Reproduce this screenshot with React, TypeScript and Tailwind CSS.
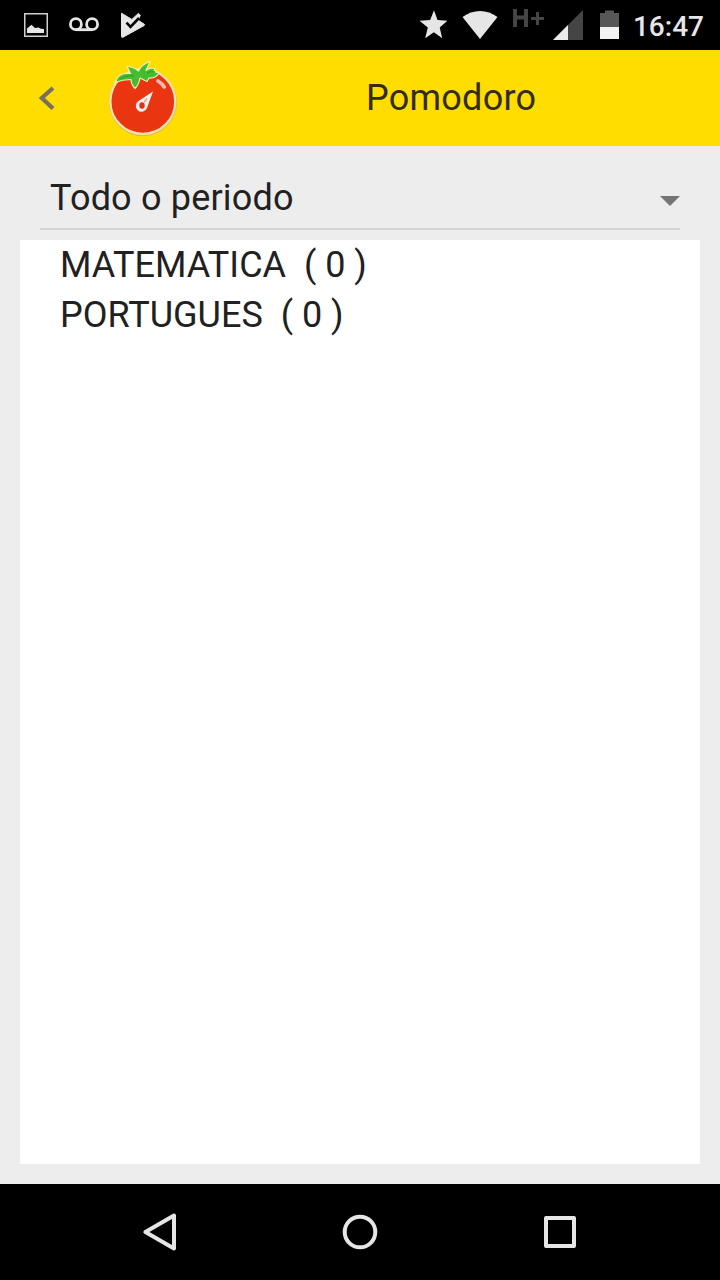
import { useState } from 'react';

type Subject = { name: string; count: number };

const SUBJECTS: Subject[] = [
  { name: 'MATEMATICA', count: 0 },
  { name: 'PORTUGUES', count: 0 },
];

function StatusBar() {
  return (
    <div className="flex h-[50px] shrink-0 items-center justify-between bg-black pr-4 pl-6 text-[#e6e6e6]">
      <div className="flex items-center">
        <svg width="24" height="50" viewBox="0 0 24 50" fill="none">
          <rect x="0.75" y="13.75" width="22.5" height="22.5" stroke="#cfcfcf" strokeWidth="1.5" />
          <path d="M3 33v-4.5l4.5-3.7 3.5 3.2 3.5-.6 2.5 1.4 3 .2V33z" fill="currentColor" />
        </svg>
        <svg className="ml-[21px]" width="30" height="50" viewBox="0 0 30 50" fill="none" stroke="currentColor" strokeWidth="2.8">
          <circle cx="6.9" cy="24.2" r="5.5" />
          <circle cx="23.1" cy="24.2" r="5.5" />
          <path d="M6.9 29.7h16.2" />
        </svg>
        <svg className="ml-[21px]" width="26" height="50" viewBox="0 0 26 50">
          <path
            d="M1.5 13.2L11.8 19.4l6.6-6 1.9 1.8-2.2 5 6.2 4q.8.7-.2 1.4L3 37.2q-1.5.7-1.5-.9z"
            fill="currentColor"
            stroke="currentColor"
            strokeWidth="1"
            strokeLinejoin="round"
          />
          <path d="M6.5 22.6l4 4.2 8.5-8.8" fill="none" stroke="#000" strokeWidth="2.6" />
        </svg>
      </div>
      <div className="flex items-center">
        <svg width="30" height="50" viewBox="0 0 30 50" fill="currentColor">
          <path d="M16 10.3l3.5 9.8 9.9.7-7.7 6.7 2.5 10.7-8.3-5.9-8.7 5.9 2.6-10.7-8.3-6.7 10.7-.7z" />
        </svg>
        <svg className="ml-3.5" width="36" height="50" viewBox="0 0 36 50" fill="currentColor">
          <path d="M18 39L.5 17Q8.5 11 18 11t17.5 6z" />
        </svg>
        <svg className="ml-3.5" width="32" height="50" viewBox="0 0 32 50" fill="none" stroke="#454545">
          <path d="M3 9v18M14 9v18M3 17.5h11" strokeWidth="4" />
          <path d="M19 18.5h13M25.5 12v13" strokeWidth="3" />
        </svg>
        <svg className="ml-[9px]" width="30" height="50" viewBox="0 0 30 50">
          <path d="M30 10v30H0z" fill="#454545" />
          <path d="M15 25v15H0z" fill="#ebebeb" />
        </svg>
        <svg className="ml-[17px]" width="19" height="50" viewBox="0 0 19 50">
          <path d="M0 13h5v-2.5h9V13h5v14H0z" fill="#575757" />
          <path d="M0 27h19v12H0z" fill="#f2f2f2" />
        </svg>
        <span className="ml-3.5 pt-1 text-[28px] leading-[50px] font-medium">16:47</span>
      </div>
    </div>
  );
}

function TomatoLogo() {
  return (
    <svg width="72" height="80" viewBox="0 0 72 80" fill="none">
      <circle cx="36" cy="44.4" r="33.4" stroke="#c9bc74" strokeWidth="1" />
      <circle cx="35.8" cy="43.4" r="32.4" fill="#ea3511" stroke="#f6dfb0" strokeWidth="2.2" />
      <path
        d="M8.5 25Q10 14 23.5 15.5L20 8.500q7 .5 11.500 4.500 3-6.500 11.500-9.500l-4 9q4-3.500 9-2l-1 3 5 1.500q-3 5.500-10 5l-2 3.500-7-3.500q-1 6.500-5 10.500-4-4-4-9-8 0-16.500 3z"
        fill="#46bd30"
        stroke="#eef0b0"
        strokeWidth="1.2"
        strokeLinejoin="round"
      />
      <path d="M13 21q7-4 14-3M40 15q4-2 8-1" stroke="#2fa928" strokeWidth="1.4" />
      <path d="M51 23q4 2.500 6.300 6" stroke="#f9b6ac" strokeWidth="3.8" strokeLinecap="round" />
      <path d="M46 33.500L31.500 43A5.800 5.800 0 1 0 40 50z" fill="#fff0ed" />
      <ellipse cx="35" cy="47.500" rx="2.700" ry="3.200" fill="#dc3018" />
      <path d="M40 40.500l-3 4" stroke="#ef8674" strokeWidth="1.2" />
    </svg>
  );
}

function NavBar() {
  return (
    <nav className="flex h-24 shrink-0 items-center justify-center gap-40 bg-black text-[#e6e6e6]">
      <button aria-label="Back">
        <svg width="40" height="40" viewBox="0 0 40 40" fill="none" stroke="currentColor" strokeWidth="4" strokeLinejoin="round">
          <path d="M34 3.6v32.8L5.4 20z" />
        </svg>
      </button>
      <button aria-label="Home">
        <svg width="40" height="40" viewBox="0 0 40 40" fill="none" stroke="currentColor" strokeWidth="4">
          <circle cx="20" cy="20" r="15.3" />
        </svg>
      </button>
      <button aria-label="Recents">
        <svg width="40" height="40" viewBox="0 0 40 40" fill="none" stroke="currentColor" strokeWidth="4" strokeLinejoin="round">
          <rect x="6" y="6" width="28" height="28" />
        </svg>
      </button>
    </nav>
  );
}

export default function App() {
  const [period] = useState('Todo o periodo');

  return (
    <div className="flex h-screen w-full flex-col bg-[#ededed] font-[Roboto,sans-serif] text-[#212121]">
      <StatusBar />

      <header className="flex h-24 shrink-0 items-center bg-[#ffdd00]">
        <button aria-label="Voltar" className="ml-9">
          <svg width="24" height="32" viewBox="0 0 24 32" fill="none" stroke="#78705f" strokeWidth="4.2">
            <path d="M17 6L5.8 16 17 26.5" />
          </svg>
        </button>
        <div className="ml-[47px]">
          <TomatoLogo />
        </div>
        <h1 className="ml-[187px] text-4xl tracking-[0.25px] text-[#332c12]">Pomodoro</h1>
      </header>

      <main className="flex flex-1 flex-col px-5 pb-5">
        <button className="mx-5 mt-5 mb-2.5 flex h-16 items-center justify-between border-b-2 border-[#d4d4d4] pl-2.5 text-left">
          <span className="pt-0.5 text-4xl tracking-[0.18px]">{period}</span>
          <svg className="mt-2" width="20" height="10" viewBox="0 0 20 10" fill="#757575">
            <path d="M0 0h20L10 10z" />
          </svg>
        </button>

        <ul className="flex-1 bg-white">
          {SUBJECTS.map((s) => (
            <li key={s.name} className="h-[50px] pl-10 text-4xl leading-[50px] whitespace-pre">
              {`${s.name}  ( ${s.count} )`}
            </li>
          ))}
        </ul>
      </main>

      <NavBar />
    </div>
  );
}
